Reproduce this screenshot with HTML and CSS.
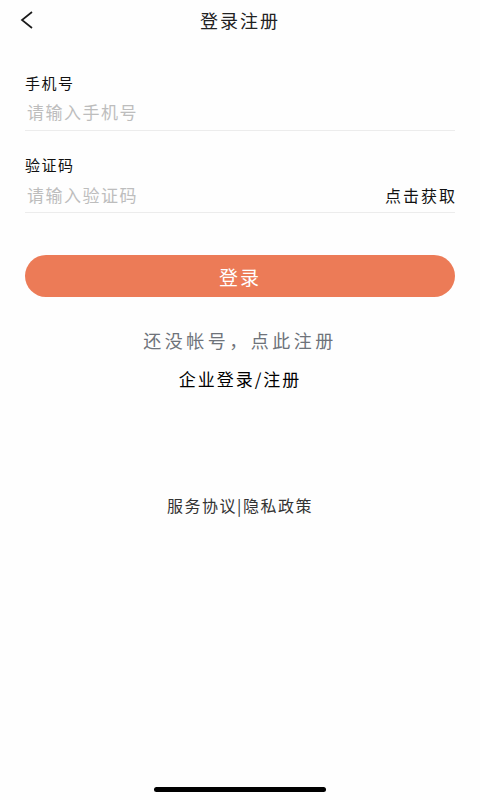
FILE: index.html
```html
<!DOCTYPE html>
<html lang="zh-CN">
  <head>
    <meta charset="UTF-8" />
    <meta name="viewport" content="width=device-width, initial-scale=1.0" />
    <title>登录注册</title>
    <link rel="stylesheet" href="styles.css">
  </head>

  <body>
    <div class="page">
      <header class="top-bar">
        <a class="back-button" href="#">
          <svg width="14" height="20" viewBox="0 0 14 20">
            <polyline points="12,2 2,10 12,18" fill="none" stroke="#1a1a1a" stroke-width="1.7" />
          </svg>
        </a>
        <h1 class="top-title">登录注册</h1>
      </header>

      <form class="login-form" action="" method="GET">
        <div class="field">
          <label for="phone">手机号</label>
          <div class="input-row">
            <input type="tel" id="phone" name="phone" placeholder="请输入手机号" />
          </div>
        </div>
        <div class="field field-code">
          <label for="code">验证码</label>
          <div class="input-row">
            <input type="text" id="code" name="code" placeholder="请输入验证码" />
            <button type="button" class="code-button">点击获取</button>
          </div>
        </div>
        <button type="submit" class="submit-button">登录</button>
      </form>

      <a class="register-link" href="#">还没帐号，点此注册</a>
      <a class="company-link" href="#">企业登录/注册</a>

      <p class="policy">服务协议|隐私政策</p>

      <div class="home-bar"></div>
    </div>
  </body>
</html>
```

FILE: styles.css
```css
:root {
  box-sizing: border-box;
  --side: 25px;
  --text: #111;
  --line: #ececec;
  --accent: #ec7b57;
}
* {
  box-sizing: inherit;
}
body {
  margin: 0;
  background: #fefefe;
  font-family: "Noto Sans CJK SC", "Noto Sans", sans-serif;
  color: var(--text);
}
.page {
  position: relative;
  width: 480px;
  height: 800px;
  display: flex;
  flex-direction: column;
  align-items: center;
}

.top-bar {
  position: relative;
  width: 100%;
  height: 40px;
  display: flex;
  align-items: center;
  justify-content: center;
}
.back-button {
  position: absolute;
  left: 20px;
  top: 10px;
  display: flex;
}
.top-title {
  margin: 0;
  font-size: 18px;
  font-weight: 400;
  letter-spacing: 2px;
  line-height: 40px;
  color: #222;
}

.login-form {
  width: 100%;
  padding: 0 var(--side);
  margin-top: 33px;
  display: flex;
  flex-direction: column;
}
.field {
  display: flex;
  flex-direction: column;
}
.field-code {
  margin-top: 24px;
}
.field label {
  font-size: 15px;
  line-height: 20px;
  letter-spacing: 1.5px;
  color: #111;
}
.input-row {
  display: flex;
  align-items: center;
  height: 38px;
  border-bottom: 1px solid var(--line);
}
.input-row input {
  flex: 1;
  border: none;
  outline: none;
  background: transparent;
  padding: 0 0 0 2px;
  font-family: inherit;
  font-size: 17px;
  letter-spacing: 1.5px;
  color: var(--text);
}
.input-row input::placeholder {
  color: #bdbdbd;
}
.field-code .input-row input {
  padding-top: 2px;
}
.code-button {
  border: none;
  background: none;
  padding: 2px 0 0;
  font-family: inherit;
  font-size: 16px;
  letter-spacing: 2px;
  margin-right: -2px;
  color: #111;
}

.submit-button {
  margin-top: 42px;
  height: 42px;
  border: none;
  border-radius: 21px;
  background: var(--accent);
  color: #fff;
  font-family: inherit;
  font-size: 19px;
  letter-spacing: 2px;
}

.register-link,
.company-link {
  text-decoration: none;
  line-height: 24px;
}
.register-link {
  margin-top: 31px;
  font-size: 18px;
  letter-spacing: 3.5px;
  color: #6e737a;
}
.company-link {
  margin-top: 15px;
  font-size: 17px;
  letter-spacing: 2px;
  color: #000;
}

.policy {
  margin: 102px 0 0;
  font-size: 16px;
  line-height: 24px;
  letter-spacing: 1.5px;
  color: #333;
}

.home-bar {
  position: absolute;
  bottom: 8px;
  left: 154px;
  width: 172px;
  height: 5px;
  border-radius: 3px;
  background: #000;
}
```
